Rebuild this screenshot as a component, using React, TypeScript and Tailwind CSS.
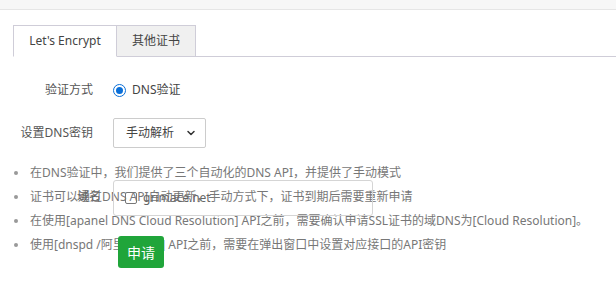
import { ChevronDown } from 'lucide-react'

const tips = [
  '在DNS验证中，我们提供了三个自动化的DNS API，并提供了手动模式',
  '证书可以通过DNS API自动更新，手动方式下，证书到期后需要重新申请',
  '在使用[apanel DNS Cloud Resolution] API之前，需要确认申请SSL证书的域DNS为[Cloud Resolution]。',
  '使用[dnspd /阿里云DNS] API之前，需要在弹出窗口中设置对应接口的API密钥',
]

export default function App() {
  return (
    <div
      className="relative w-[616px] h-[308px] overflow-hidden bg-white text-[12px] text-[#555]"
      style={{ fontFamily: '"Noto Sans", "Noto Sans CJK SC", sans-serif' }}
    >
      <div className="h-[10px] bg-[#f7f7f7] border-b border-[#e6e6e6]" />

      <div className="mt-[15px] ml-[13px] flex border-b border-[#cfcdd8]">
        <div className="-mb-px h-[32px] w-[104px] flex items-center justify-center bg-white border border-b-white border-[#cfcdd8] text-[#444]">
          Let's Encrypt
        </div>
        <div className="h-[31px] w-[79px] flex items-center justify-center bg-[#f0f0f0] border-t border-r border-[#cfcdd8] text-[#444]">
          其他证书
        </div>
      </div>

      <div className="ml-[13px] mt-[21px] flex items-center h-[24px]">
        <div className="w-[80px] text-right text-[#555]">验证方式</div>
        <label className="ml-[20px] flex items-center gap-[6px] text-[#444]">
          <span className="w-[13px] h-[13px] rounded-full border-[1.5px] border-[#0a6fd8] flex items-center justify-center">
            <span className="w-[7px] h-[7px] rounded-full bg-[#0a6fd8]" />
          </span>
          DNS验证
        </label>
      </div>

      <div className="ml-[7px] mt-[16px] flex items-center h-[30px]">
        <div className="w-[86px] text-right text-[#555]">设置DNS密钥</div>
        <div className="ml-[20px] w-[93px] h-[30px] border border-[#ccc] rounded-[2px] flex items-center justify-between pl-[12px] pr-[8px] text-[#444]">
          手动解析
          <ChevronDown size={12} strokeWidth={3} className="text-[#333]" />
        </div>
      </div>

      <ul className="mt-[13px] ml-[14px] flex flex-col">
        {tips.map((t) => (
          <li key={t} className="h-[24px] flex items-center gap-[12px] text-[#777] whitespace-nowrap">
            <span className="w-[4px] h-[4px] rounded-full bg-[#999]" />
            {t}
          </li>
        ))}
      </ul>

      {/* overlapping leftovers from another form */}
      <div className="absolute left-[77px] top-[188px] text-[#666]">域名</div>
      <div className="absolute left-[113px] top-[180px] w-[260px] h-[36px] border border-[#d5d5d5] rounded-[3px] flex items-center pl-[11px] gap-[6px] text-[#666]">
        <span className="w-[12px] h-[12px] border border-[#777] rounded-[2px]" />
        <span>grimace.net</span>
      </div>
      <button className="absolute left-[118px] top-[236px] w-[46px] h-[32px] rounded-[3px] bg-[#20a53a] text-white text-[14px] flex items-center justify-center">
        申请
      </button>
    </div>
  )
}
